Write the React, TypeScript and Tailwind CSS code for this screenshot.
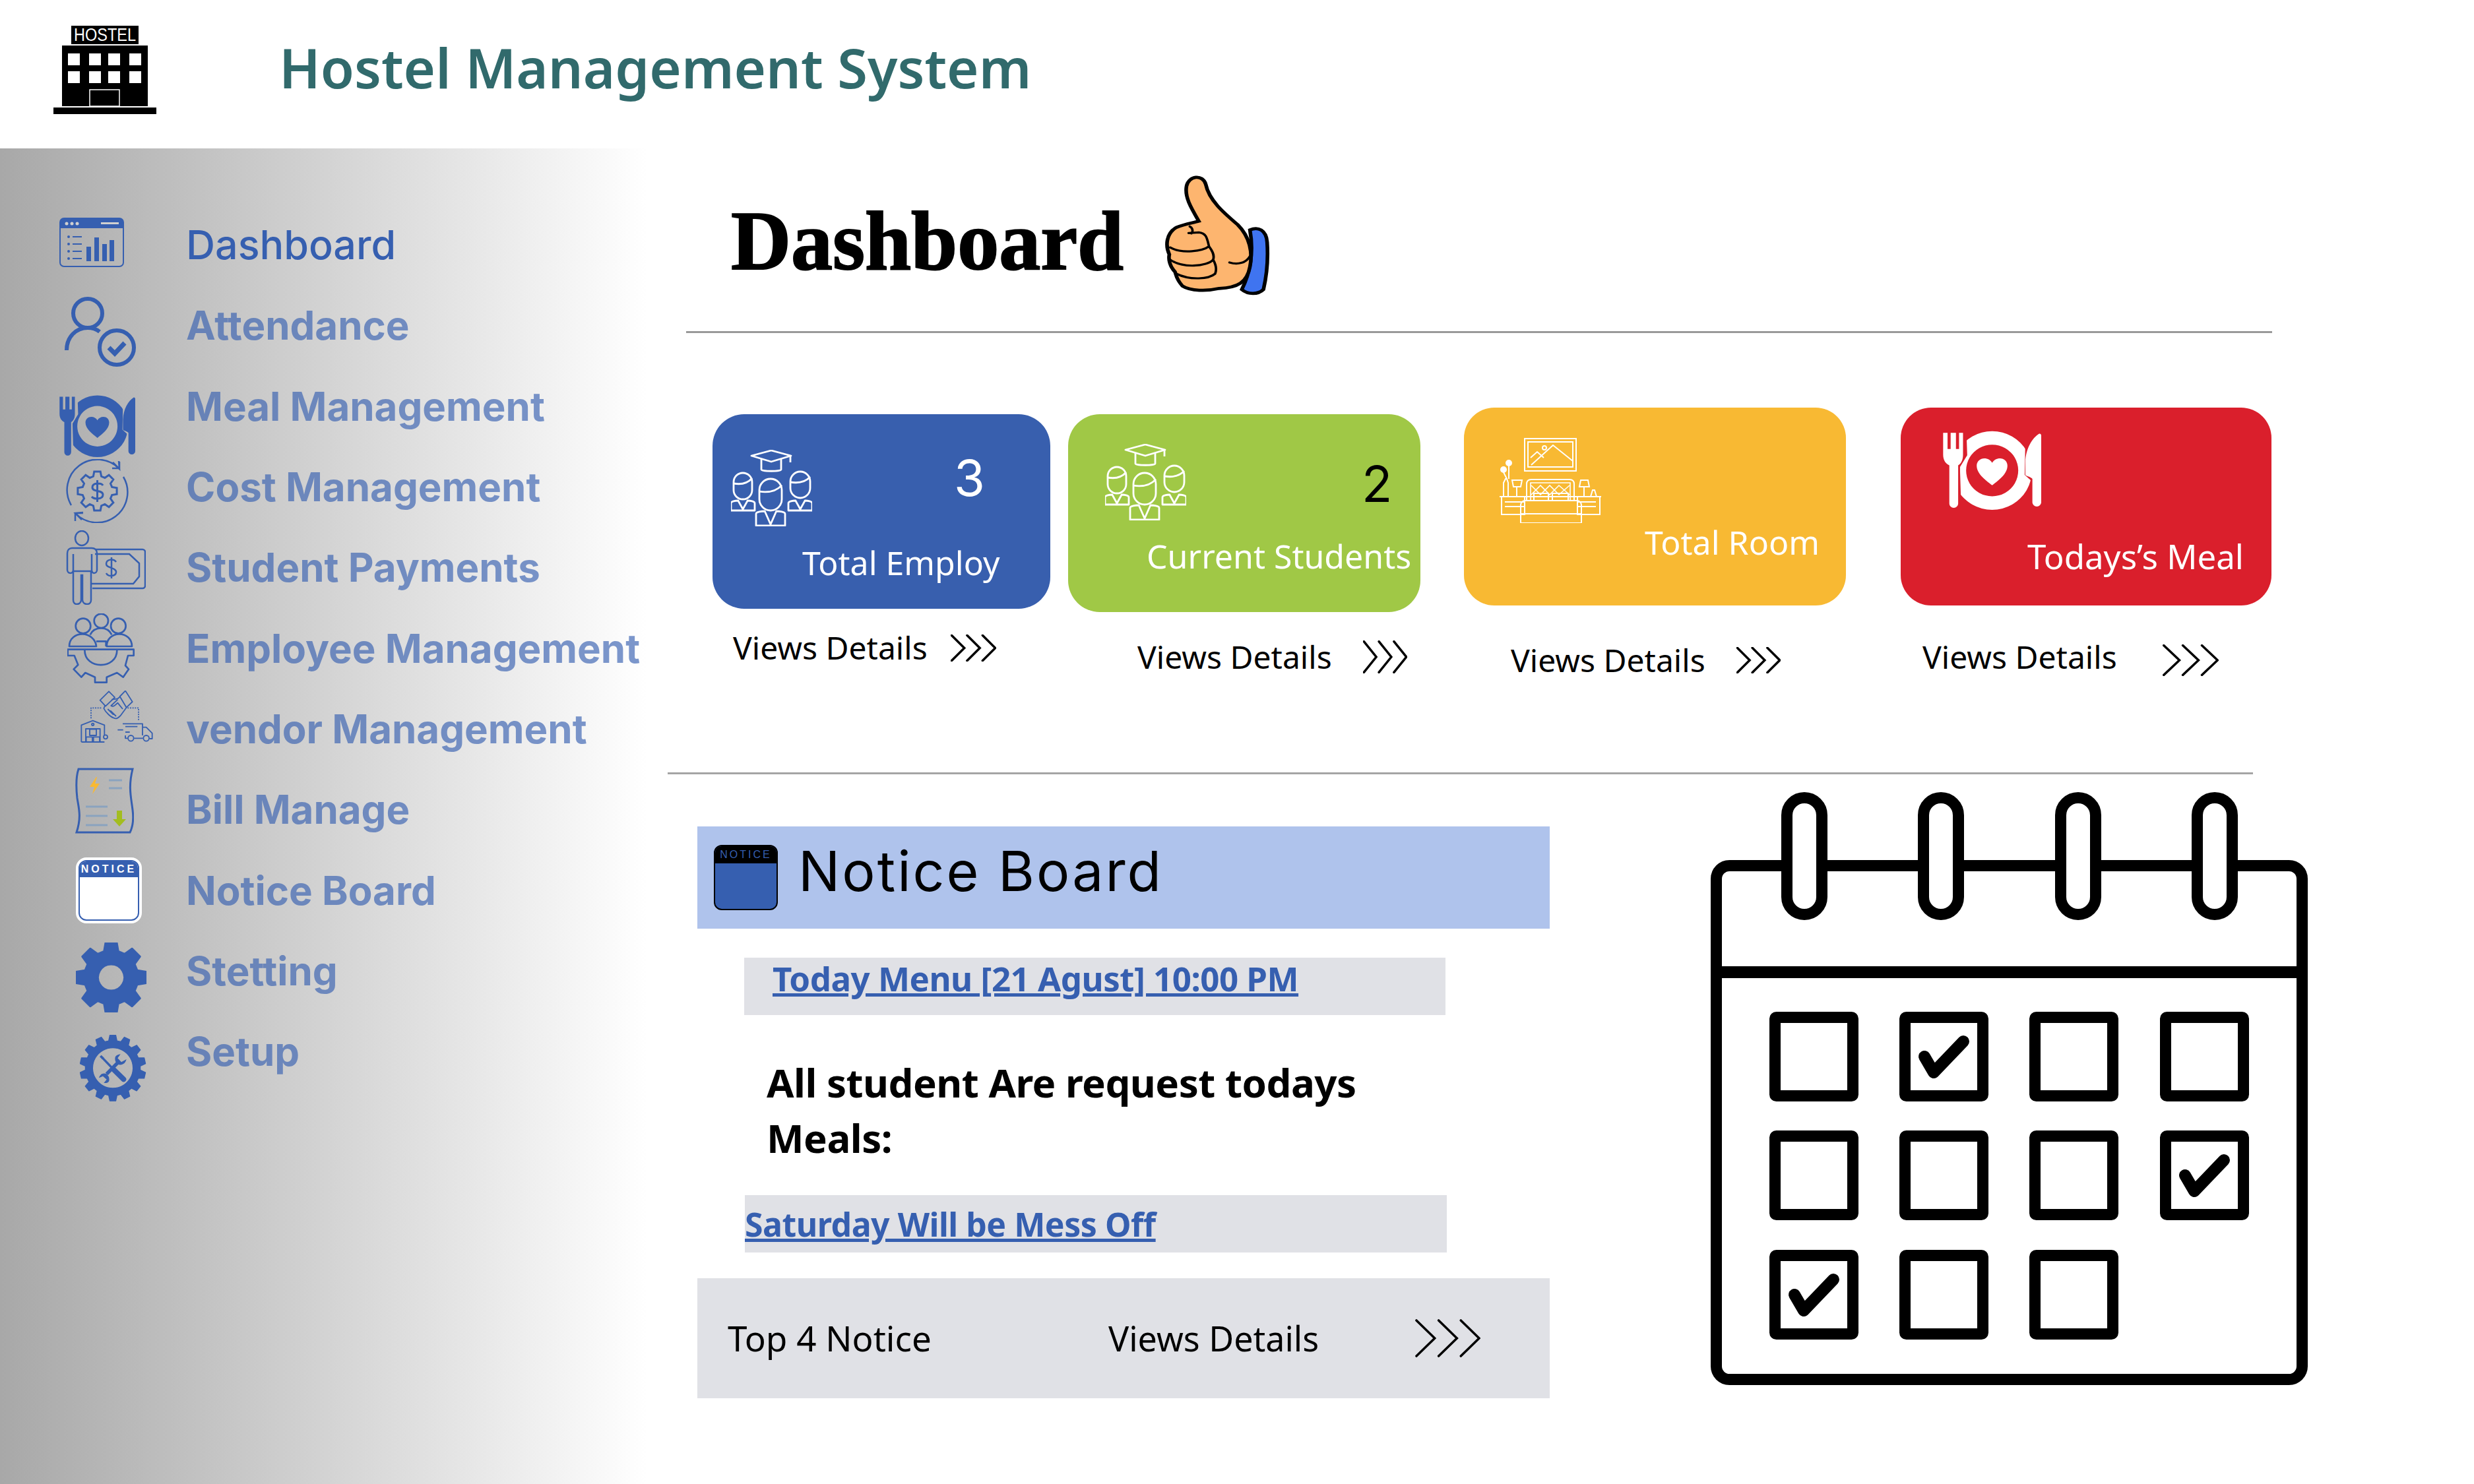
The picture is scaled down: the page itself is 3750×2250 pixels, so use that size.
const BLUE = "#365fb0";

function gearPath(cx: number, cy: number, ro: number, ri: number, n: number) {
  const step = (Math.PI * 2) / n;
  let d = "";
  for (let i = 0; i < n; i++) {
    const a = i * step - Math.PI / 2;
    const pts: [number, number][] = [
      [ri, a - step * 0.34],
      [ro, a - step * 0.2],
      [ro, a + step * 0.2],
      [ri, a + step * 0.34],
    ];
    pts.forEach(([r, t], j) => {
      const x = (cx + r * Math.cos(t)).toFixed(1);
      const y = (cy + r * Math.sin(t)).toFixed(1);
      d += (i === 0 && j === 0 ? "M" : "L") + x + " " + y + " ";
    });
  }
  return d + "Z";
}

function HostelLogo() {
  return (
    <svg viewBox="0 0 156 134" className="w-[156px] h-[134px]">
      <rect x="27" y="0" width="102" height="28" fill="#000" />
      <text x="78" y="23" textAnchor="middle" fill="#fff" fontSize="27" fontFamily="Liberation Sans" textLength="94" lengthAdjust="spacingAndGlyphs">HOSTEL</text>
      <rect x="13" y="30" width="130" height="92" fill="#000" />
      {[22, 54, 83, 115].map((x) => (
        <g key={x} fill="#fff">
          <rect x={x} y="42" width="18" height="18" />
          <rect x={x} y="69" width="18" height="18" />
        </g>
      ))}
      <rect x="55" y="97" width="45" height="25" fill="none" stroke="#fff" strokeWidth="1.5" />
      <rect x="0" y="124" width="156" height="10" fill="#000" />
    </svg>
  );
}

function DashIcon() {
  return (
    <svg viewBox="0 0 98 75" className="w-[98px] h-[75px] ml-[90px] mt-[-8px] shrink-0" fill={BLUE}>
      <rect x="1" y="1" width="96" height="73" rx="6" fill="none" stroke={BLUE} strokeWidth="2" />
      <path d="M1 7a6 6 0 0 1 6-6h84a6 6 0 0 1 6 6v9H1z" />
      <circle cx="11" cy="9" r="2.500" fill="#d0d0d0" />
      <circle cx="19" cy="9" r="2.500" fill="#d0d0d0" />
      <circle cx="27" cy="9" r="2.500" fill="#d0d0d0" />
      <rect x="63" y="7" width="27" height="3" fill="#d0d0d0" />
      {[29, 40, 51, 62].map((y) => (
        <g key={y}>
          <circle cx="14" cy={y} r="2" />
          <rect x="20" y={y - 1} width="14" height="2" />
        </g>
      ))}
      <rect x="41" y="44" width="7" height="22" />
      <rect x="53" y="30" width="7" height="36" />
      <rect x="65" y="40" width="7" height="26" />
      <rect x="76" y="34" width="7" height="32" />
    </svg>
  );
}

function AttendanceIcon() {
  return (
    <svg viewBox="0 0 109 106" className="w-[109px] h-[106px] ml-[97px] mt-[20px] shrink-0" fill="none" stroke={BLUE} strokeWidth="6">
      <circle cx="36" cy="25" r="22" />
      <path d="M4 81c0-20 14-34 32-34 7 0 13 2 18 6" />
      <circle cx="80" cy="77" r="26" />
      <path d="M68 77l9 9 15-16" strokeWidth="7" />
    </svg>
  );
}

function MealIcon({ id, fill, className }: { id: string; fill: string; className: string }) {
  return (
    <svg viewBox="45 38 445 362" preserveAspectRatio="none" className={className} fill={fill}>
      <clipPath id={id}>
        <polygon points="150,0 420,0 415,240 442,264 442,400 128,400 122,205 155,150" />
      </clipPath>
      <path clipPath={`url(#${id})`} fillRule="evenodd" d="M268 40a180 180 0 1 0 0.01 0zM268 102a118 118 0 1 1-0.01 0z" />
      <path fillRule="evenodd" d="M46 48h90v100c0 25-10 42-22 48v175a20 20 0 0 1-40 0V196c-15-6-28-22-28-48zM66 48h14v74H66zM104 48h14v74h-14z" />
      <path d="M480 52C450 70 420 120 418 180V240C420 245 445 250 450 258V365a20 20 0 0 0 40 0V60c0-6-5-10-10-8z" />
      <path d="M268 288C235 262 198 235 198 198c0-20 17-33 34-33 16 0 29 8 36 20 7-12 20-20 36-20 17 0 33 13 33 33 0 37-36 64-69 90z" />
    </svg>
  );
}

function CostIcon() {
  return (
    <svg viewBox="0 0 97 97" className="w-[97px] h-[97px] ml-[99px] mt-[12px] shrink-0" fill="none" stroke={BLUE} strokeWidth="2.5">
      <path d="M82 15A46 46 0 0 0 9 70" />
      <path d="M15 82A46 46 0 0 0 88 27" />
      <path d="M72 5l10 10-1-12M71 14h11V4" />
      <path d="M25 92L15 82l12-1M15 94V82h12" />
      <path d={gearPath(48.5, 48.5, 30, 23, 8)} strokeWidth="3" />
      <path d="M57 40c-2-4-16-5-16 3 0 8 16 3 16 11 0 8-14 7-17 3M48.500 32v33" strokeWidth="3" />
    </svg>
  );
}

function StudentPayIcon() {
  return (
    <svg viewBox="0 0 121 113" className="w-[121px] h-[113px] ml-[100px] shrink-0" fill="none" stroke={BLUE} strokeWidth="2.5">
      <ellipse cx="24" cy="12" rx="10" ry="11" />
      <path d="M9 27h30c5 0 8 3 8 8v25c0 6-8 7-8 0V36v26H11V36v24c0 7-9 6-9 0V35c0-5 3-8 7-8zM11 62v44c0 8 11 8 12 0V68h2v38c1 8 13 8 13 0V62" />
      <path d="M44 29h72a4 4 0 0 1 4 4v51a4 4 0 0 1-4 4H40" />
      <path d="M44 36h52l15 14v20l-9 11H38" />
      <path d="M82 48c-4-6-15-4-15 3s16 5 15 13c-1 6-12 7-15 1M75 41v32" transform="translate(-6 0)" />
    </svg>
  );
}

function EmployeeIcon() {
  return (
    <svg viewBox="36 28 306 318" className="w-[102px] h-[106px] ml-[102px] shrink-0" fill="none" stroke={BLUE} strokeWidth="8" strokeLinejoin="round">
      <circle cx="190" cy="62" r="32" />
      <circle cx="108" cy="85" r="34" />
      <circle cx="268" cy="85" r="34" />
      <path d="M45 178C45 140 75 122 105 122C135 122 165 145 168 178Z" />
      <path d="M215 178C215 145 240 122 272 122C305 122 330 145 330 178Z" />
      <path d="M140 125C150 105 170 95 190 95C210 95 228 105 238 125M168 155H212V178" />
      <path d="M38 192H338V220H312L300 265L315 282L290 318L262 298L215 318V342H162V318L118 298L100 318L65 282L85 262L68 220H38Z" />
      <path d="M115 195C115 285 262 285 262 195" />
    </svg>
  );
}

function VendorIcon() {
  return (
    <svg viewBox="36 21 330 237" className="w-[110px] h-[79px] ml-[122px] mt-[-36px] shrink-0" fill="none" stroke={BLUE} strokeWidth="5.500" strokeLinejoin="round">
      <path d="M125 65L165 25L192 52L150 92ZM215 48L240 22L272 72L245 98Z" />
      <path d="M178 62L205 58L215 50M148 88L142 102C150 120 175 145 195 148C205 150 212 140 218 135L245 98M205 62L175 90C185 97 195 87 205 77L228 105M160 105L185 130M172 112L198 138" />
      <path d="M84 148V100H132M250 100H300V160" strokeDasharray="6 5" />
      <path d="M40 255V178L92 158L145 178V225M40 255H145M60 255V195H125V255" />
      <rect x="78" y="197" width="30" height="28" />
      <rect x="62" y="232" width="28" height="23" />
      <rect x="95" y="232" width="28" height="23" />
      <circle cx="92" cy="175" r="5" />
      <circle cx="150" cy="232" r="9" />
      <path d="M228 172H318V225M318 188H335L362 215V240H350M280 238H320M240 225V238H250M228 172h35M240 185h55M205 200h25M240 210h20" />
      <circle cx="265" cy="238" r="13" />
      <circle cx="335" cy="238" r="13" />
    </svg>
  );
}

function BillIcon() {
  return (
    <svg viewBox="0 0 89 100" className="w-[89px] h-[100px] ml-[114px] mt-[-26px] shrink-0" fill="none">
      <path d="M5 2h82c-7 28-2 44 0 62 2 16 0 26-4 34H2c8-24 3-38 1-52C1 28 1 14 5 2z" stroke={BLUE} strokeWidth="3" />
      <path d="M32 14L22 29h7l-3 11 11-16h-7l3-10z" fill="#f8b933" />
      <path d="M51 19h20M51 31h20M16 59h33M16 73h33M16 87h33" stroke="#8aa3bf" strokeWidth="3" />
      <path d="M63 65h8v13h6L67 89 57 78h6z" fill="#a3bd1f" />
    </svg>
  );
}

function GearIcon() {
  return (
    <svg viewBox="0 0 107 106" className="w-[107px] h-[106px] ml-[115px] mt-[20px] shrink-0" fill={BLUE}>
      <path fillRule="evenodd" d={gearPath(53.5, 53, 54, 41, 8) + " M53.500 33a20 20 0 1 0 0.01 0z"} stroke={BLUE} strokeWidth="3" strokeLinejoin="round" />
    </svg>
  );
}

function SetupIcon() {
  return (
    <svg viewBox="33 24 303 303" className="w-[101px] h-[101px] ml-[121px] mt-[50px] shrink-0" fill={BLUE}>
      <path fillRule="evenodd" d={gearPath(183, 175, 150, 125, 14) + " M183 83a92 92 0 1 0 0.01 0z"} stroke={BLUE} strokeWidth="4" strokeLinejoin="round" />
      <path d="M135 128L185 180" stroke={BLUE} strokeWidth="10" />
      <path d="M185 180L232 226" stroke={BLUE} strokeWidth="24" strokeLinecap="round" />
      <path d="M123 124l8-8 12 12-8 8z" />
      <path d="M208 148L155 202" stroke={BLUE} strokeWidth="16" />
      <path d="M195 145C190 125 195 115 218 112L205 130L222 148L245 135C240 155 225 165 205 158Z" />
      <path d="M165 215C170 235 165 245 142 243L155 227L138 212L120 220C125 205 135 195 155 202Z" />
    </svg>
  );
}

function Thumb() {
  return (
    <svg viewBox="1196 52 258 352" preserveAspectRatio="none" className="w-[160px] h-[187px] mt-[37px] shrink-0" stroke="#000" strokeWidth="9" strokeLinecap="round" fill="none">
      <path d="M1405 215C1425 205 1445 215 1447 250C1450 300 1445 350 1438 385C1425 400 1400 400 1385 385C1405 340 1415 280 1405 215Z" fill="#3f74f0" />
      <path d="M1280 190C1260 150 1245 120 1250 90C1255 60 1290 55 1297 85C1305 130 1340 165 1375 200C1405 235 1412 280 1405 320C1398 365 1375 380 1330 382C1300 390 1260 390 1240 375C1225 355 1225 345 1222 335C1210 320 1205 300 1208 285C1198 260 1200 225 1225 208C1245 198 1265 195 1280 190Z" fill="#fdb56f" />
      <path d="M1210 265C1240 285 1290 275 1305 262C1300 240 1300 225 1280 222L1255 224M1210 300C1240 325 1300 320 1315 300C1320 285 1310 270 1305 262M1225 340C1260 360 1305 355 1320 340C1325 325 1320 310 1315 300M1258 205C1266 210 1266 220 1262 225M1355 308C1375 315 1395 310 1405 290" strokeWidth="6" />
    </svg>
  );
}

function GroupIcon() {
  const bust = (cx: number, cy: number, rx: number, ry: number, top: number, w: number, bottom: number) => (
    <g key={cx}>
      <rect x={cx - rx} y={cy - ry} width={rx * 2} height={ry * 2} rx={rx} />
      <path d={`M${cx - rx} ${cy - ry * 0.2}c${rx * 0.8} 2 ${rx * 1.5} 0 ${rx * 2} -${ry * 0.4}`} />
      <path d={`M${cx - w} ${bottom}V${top + 4}c0-3 ${w * 0.4} -4 ${w * 0.6} -4L${cx} ${bottom - 2}L${cx + w * 0.4} ${top}c${w * 0.2} 0 ${w * 0.6} 1 ${w * 0.6} 4V${bottom}z`} />
    </g>
  );
  return (
    <svg viewBox="0 0 123 116" className="w-[123px] h-[116px] shrink-0" fill="none" stroke="#fff" strokeWidth="2.8" strokeLinejoin="round">
      <path d="M31 9l30-8 30 8-30 9z" />
      <path d="M46 14v16c0 3 30 3 30 0V14M90 9v10" />
      {bust(18, 55, 14, 20, 77, 18, 92)}
      {bust(60, 68, 17, 24, 93, 22, 115)}
      {bust(105, 53, 15, 20, 77, 18, 92)}
    </svg>
  );
}

function RoomIcon() {
  return (
    <svg viewBox="0 0 154 129" className="w-[154px] h-[129px] shrink-0" fill="none" stroke="#fff" strokeWidth="2">
      <rect x="38" y="1" width="78" height="49" />
      <rect x="43" y="6" width="68" height="38" />
      <path d="M48 41l33-30 30 24M47 30l10-9 10 9" />
      <circle cx="68" cy="15" r="3" />
      <circle cx="14" cy="38" r="4" fill="#fff" />
      <circle cx="6" cy="48" r="4" fill="#fff" />
      <path d="M14 42v20M6 52l5 10M6 88V68l3-6h2l2 6v20" />
      <path d="M19 64h15l-2 10H21zM26 74v15M121 74l2-10h11l2 10zM128 74v15M138 89l3-10h3l3 10" />
      <path d="M41 95V70c0-5 3-7 7-7h58c4 0 7 2 7 7v25" />
      <path d="M47 96V68h60v28M48 72l14 14 14-14 14 14 16-14M48 86l14-14 14 14 14-14 16 14" strokeWidth="1.6" />
      <path d="M52 96V84h22v12M80 96V84h24v12" />
      <path d="M3 89h35v27H3zM118 89h34v27h-34zM8 97h30M8 104h30M118 97h28M118 104h28M0 89h154" />
      <path d="M32 129V102c0-4 3-7 7-7h78c4 0 7 3 7 7v27zM32 115h92" />
    </svg>
  );
}

function Chevrons({ className }: { className: string }) {
  return (
    <svg viewBox="0 0 100 60" preserveAspectRatio="none" className={className} fill="none" stroke="#000" strokeWidth="3.5" strokeLinecap="round">
      <path vectorEffect="non-scaling-stroke" d="M2 2L30 30L2 58M36 2L64 30L36 58M70 2L98 30L70 58" />
    </svg>
  );
}

function Calendar() {
  const xs = [89, 286, 483, 681];
  const ys = [333, 513, 694];
  const rings = [107, 314, 522, 729];
  const checked = ["1-0", "3-1", "0-2"];
  return (
    <svg viewBox="0 0 905 899" className="w-[905px] h-[899px] ml-[244px] mt-[27px] shrink-0" fill="none" stroke="#000" strokeWidth="17" strokeLinejoin="round" strokeLinecap="round">
      <rect x="8.500" y="111.500" width="888" height="779" rx="20" />
      <path d="M0 273h905" strokeWidth="18" strokeLinecap="butt" />
      {rings.map((x) => (
        <rect key={x} x={x + 8.5} y="8.500" width="53" height="177" rx="26.500" fill="#fff" />
      ))}
      {ys.map((y, r) =>
        xs.map((x, c) => {
          if (r === 2 && c === 3) return null;
          return (
            <g key={`${c}-${r}`}>
              <rect x={x + 8.5} y={y + 8.5} width="118" height="119" rx="2" />
              {checked.includes(`${c}-${r}`) && <path d="M38 68L52 92L97 45" transform={`translate(${x} ${y})`} strokeWidth="18" />}
            </g>
          );
        })
      )}
    </svg>
  );
}

const navLabel = "text-[60px] leading-[72px] font-bold text-[#365fb0]/65";

export default function App() {
  return (
    <div className="w-[3750px] h-[2250px] overflow-hidden bg-white flex flex-col font-['Noto_Sans',sans-serif]">
      <header className="h-[225px] shrink-0 flex items-start">
        <div className="ml-[81px] mt-[39px] shrink-0">
          <HostelLogo />
        </div>
        <h1 className="ml-[186px] mt-[50px] text-[83px] leading-[104px] font-semibold text-[#316a6c] whitespace-nowrap">
          Hostel Management System
        </h1>
      </header>

      <div className="flex flex-1 min-h-0">
        <aside className="w-[980px] shrink-0 pt-[85px] bg-gradient-to-r from-[#a8a8a8] to-white font-['Inter',sans-serif]">
          <nav className="flex flex-col">
            {[
              { icon: <DashIcon />, label: "Dashboard" },
              { icon: <AttendanceIcon />, label: "Attendance" },
              { icon: <MealIcon id="meal-nav" fill={BLUE} className="w-[115px] h-[94px] ml-[90px] mt-[60px] shrink-0" />, label: "Meal Management" },
              { icon: <CostIcon />, label: "Cost Management" },
              { icon: <StudentPayIcon />, label: "Student Payments" },
              { icon: <EmployeeIcon />, label: "Employee Management" },
              { icon: <VendorIcon />, label: "vendor Management" },
              { icon: <BillIcon />, label: "Bill Manage" },
              {
                icon: (
                  <div className="w-[100px] h-[100px] ml-[115px] shrink-0 rounded-[16px] border-2 border-white bg-white p-[2px]">
                    <div className="h-full rounded-[12px] border-2 border-[#365fb0] overflow-hidden">
                      <div className="h-[24px] bg-[#365fb0] text-white text-[16px] leading-[24px] font-bold tracking-[4px] text-center font-['Liberation_Sans',sans-serif]">NOTICE</div>
                    </div>
                  </div>
                ),
                label: "Notice Board",
              },
              { icon: <GearIcon />, label: "Stetting" },
              { icon: <SetupIcon />, label: "Setup" },
            ].map((item, i) => (
              <div key={item.label} className="flex items-center h-[122.3px]">
                <div className="w-[282px] h-full shrink-0 flex items-center">{item.icon}</div>
                <span className={i === 0 ? "text-[61px] leading-[72px] font-medium text-[#365fb0]" : navLabel}>{item.label}</span>
              </div>
            ))}
          </nav>
        </aside>

        <main className="flex-1 min-w-0 flex flex-col">
          <div className="h-[277px] shrink-0 flex items-start">
            <h2 className="ml-[128px] mt-[78px] w-[657px] shrink-0 text-[126px] leading-[125px] font-bold text-black font-['Liberation_Serif',serif] [-webkit-text-stroke:2px_black]">
              Dashboard
            </h2>
            <Thumb />
          </div>
          <div className="ml-[60px] w-[2404px] h-[3px] bg-[#999999] shrink-0" />

          <section className="h-[666px] shrink-0 flex items-start">
            <div className="ml-[100px] w-[512px] shrink-0 mt-[123px]">
              <div className="h-[295px] rounded-[48px] bg-[#385fae] pt-[54px] pl-[28px] text-white">
                <div className="flex items-start">
                  <GroupIcon />
                  <span className="ml-[215px] mt-[-4px] text-[76px] leading-[92px] font-['Inter',sans-serif]">3</span>
                </div>
                <div className="ml-[108px] mt-[23px] text-[50px] leading-[64px] whitespace-nowrap">Total Employ</div>
              </div>
              <div className="flex items-center h-[60px] mt-[29px] ml-[31px]">
                <span className="w-[330px] shrink-0 text-[48px] whitespace-nowrap">Views Details</span>
                <Chevrons className="w-[69px] h-[41px] shrink-0" />
              </div>
            </div>

            <div className="ml-[27px] w-[534px] shrink-0 mt-[123px]">
              <div className="h-[300px] rounded-[48px] bg-[#a0c846] pt-[45px] pl-[56px] text-white">
                <div className="flex items-start">
                  <GroupIcon />
                  <span className="ml-[266px] mt-[14px] text-[76px] leading-[92px] text-black font-['Inter',sans-serif]">2</span>
                </div>
                <div className="ml-[63px] mt-[22px] text-[50px] leading-[64px] whitespace-nowrap">Current Students</div>
              </div>
              <div className="flex items-center h-[60px] mt-[38px] ml-[105px]">
                <span className="w-[342px] shrink-0 text-[48px] whitespace-nowrap">Views Details</span>
                <Chevrons className="w-[67px] h-[50px] shrink-0" />
              </div>
            </div>

            <div className="ml-[66px] w-[579px] shrink-0 mt-[113px]">
              <div className="h-[300px] rounded-[46px] bg-[#f8b933] pt-[46px] pl-[54px] text-white">
                <RoomIcon />
                <div className="ml-[220px] mt-[-3px] text-[50px] leading-[64px] whitespace-nowrap">Total Room</div>
              </div>
              <div className="flex items-center h-[60px] mt-[53px] ml-[71px]">
                <span className="w-[342px] shrink-0 text-[48px] whitespace-nowrap">Views Details</span>
                <Chevrons className="w-[67px] h-[40px] shrink-0" />
              </div>
            </div>

            <div className="ml-[83px] w-[562px] shrink-0 mt-[113px]">
              <div className="h-[300px] rounded-[46px] bg-[#da1f2c] pt-[35px] pl-[64px] text-white">
                <MealIcon id="meal-card" fill="#fff" className="w-[149px] h-[120px]" />
                <div className="ml-[128px] mt-[38px] text-[51px] leading-[64px] whitespace-nowrap">Todays’s Meal</div>
              </div>
              <div className="flex items-center h-[60px] mt-[53px] ml-[33px]">
                <span className="w-[364px] shrink-0 mb-[10px] text-[48px] whitespace-nowrap">Views Details</span>
                <Chevrons className="w-[85px] h-[48px] shrink-0" />
              </div>
            </div>
          </section>

          <div className="ml-[32px] w-[2403px] h-[3px] bg-[#a5a5a5] shrink-0" />

          <div className="flex items-start flex-1 min-h-0">
            <section className="ml-[77px] mt-[79px] w-[1292px] shrink-0">
              <div className="h-[155px] bg-[#afc3ec] flex items-center pl-[25px]">
                <div className="w-[97px] h-[99px] shrink-0 rounded-[12px] border-2 border-black bg-[#365fb0] overflow-hidden">
                  <div className="h-[26px] bg-black text-[#365fb0] text-[16px] leading-[26px] tracking-[3px] text-center font-['Liberation_Sans',sans-serif]">NOTICE</div>
                </div>
                <span className="ml-[31px] mb-[20px] text-[84px] leading-[96px] tracking-[3px] text-black font-['Inter',sans-serif]">Notice Board</span>
              </div>
              <div className="mt-[44px] ml-[71px] w-[1063px] h-[87px] bg-[#e0e1e6] pl-[43px] text-[51px] leading-[62px] font-bold tracking-[-0.5px] text-[#365fb0] underline whitespace-nowrap">
                Today Menu [21 Agust] 10:00 PM
              </div>
              <div className="h-[273px] pt-[60px] pl-[105px] text-[60px] leading-[84px] font-bold tracking-[-0.5px] text-black w-[1100px]">
                All student Are request todays Meals:
              </div>
              <div className="ml-[72px] w-[1064px] h-[87px] bg-[#e0e1e6] text-[50px] leading-[88px] font-bold tracking-[-0.5px] text-[#365fb0] underline whitespace-nowrap">
                Saturday Will be Mess Off
              </div>
              <div className="mt-[39px] h-[182px] bg-[#e0e1e6] flex items-center pl-[46px] text-black">
                <span className="w-[577px] shrink-0 text-[53px]">Top 4 Notice</span>
                <span className="w-[465px] shrink-0 text-[52px]">Views Details</span>
                <Chevrons className="w-[99px] h-[58px] shrink-0" />
              </div>
            </section>
            <Calendar />
          </div>
        </main>
      </div>
    </div>
  );
}
